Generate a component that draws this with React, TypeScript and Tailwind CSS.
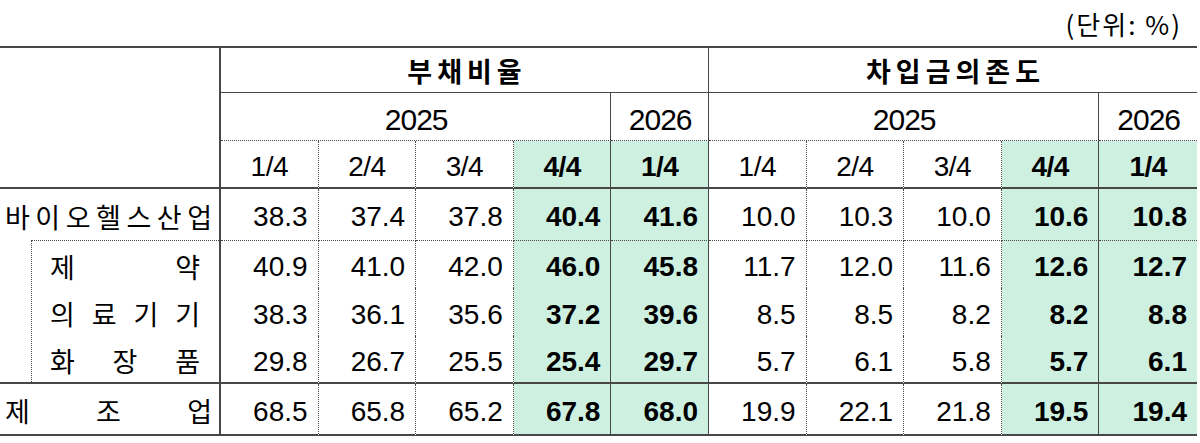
import React from "react";

type DataRow = { vals: string[] };

const rows: DataRow[] = [
  { vals: ["38.3", "37.4", "37.8", "40.4", "41.6", "10.0", "10.3", "10.0", "10.6", "10.8"] },
  { vals: ["40.9", "41.0", "42.0", "46.0", "45.8", "11.7", "12.0", "11.6", "12.6", "12.7"] },
  { vals: ["38.3", "36.1", "35.6", "37.2", "39.6", "8.5", "8.5", "8.2", "8.2", "8.8"] },
  { vals: ["29.8", "26.7", "25.5", "25.4", "29.7", "5.7", "6.1", "5.8", "5.7", "6.1"] },
  { vals: ["68.5", "65.8", "65.2", "67.8", "68.0", "19.9", "22.1", "21.8", "19.5", "19.4"] },
];

const quarters = ["1/4", "2/4", "3/4", "4/4", "1/4", "1/4", "2/4", "3/4", "4/4", "1/4"];

function rightCls(i: number): string {
  if (i === 9) return "";
  if (i === 3 || i === 4 || i === 8) return "border-r";
  return "border-r [border-right-style:dotted]";
}

function isHi(i: number): boolean {
  return i === 3 || i === 4 || i === 8 || i === 9;
}

function bottomCls(r: number): string {
  if (r === 0) return "border-b [border-bottom-style:dotted]";
  if (r === 1 || r === 2) return "";
  return "border-b-2";
}

function Spread({ chars, className }: { chars: string[]; className: string }) {
  return (
    <div className={"flex items-center justify-between " + className}>
      {chars.map((c, i) => (
        <span key={i}>{c}</span>
      ))}
    </div>
  );
}

export default function App() {
  const kr = "font-['Noto_Sans_CJK_KR',sans-serif]";
  const cells: React.ReactNode[] = [];

  // Header row 1
  cells.push(
    <div key="corner" className="row-span-3 border-r-2 border-b-2 border-[#474747]" />
  );
  cells.push(
    <div
      key="h-debt"
      className={"col-span-5 border-b border-r border-[#474747] flex items-center justify-center pl-[5px] text-[27px] font-bold tracking-[5px] leading-none " + kr}
    >
      부채비율
    </div>
  );
  cells.push(
    <div
      key="h-borrow"
      className={"col-span-5 border-b border-[#474747] flex items-center justify-center pl-[5px] text-[27px] font-bold tracking-[5px] leading-none " + kr}
    >
      차입금의존도
    </div>
  );

  // Header row 2
  const yearCls =
    "border-b [border-bottom-style:dotted] border-[#474747] flex items-center justify-center pt-[6px] pl-[1px] text-[30px] tracking-[-1px] leading-none";
  cells.push(<div key="y1" className={"col-span-4 border-r " + yearCls}>2025</div>);
  cells.push(<div key="y2" className={"border-r " + yearCls}>2026</div>);
  cells.push(<div key="y3" className={"col-span-4 border-r " + yearCls}>2025</div>);
  cells.push(<div key="y4" className={yearCls}>2026</div>);

  // Header row 3
  quarters.forEach((q, i) => {
    cells.push(
      <div
        key={"q" + i}
        className={
          "border-b-2 border-[#474747] flex items-center justify-center pt-[5px] text-[28px] tracking-[-0.5px] leading-none " +
          rightCls(i) +
          (isHi(i) ? " bg-[#cdf0e1] font-bold" : "")
        }
      >
        {q}
      </div>
    );
  });

  const dataCells = (r: number) =>
    rows[r].vals.map((v, i) => (
      <div
        key={"d" + r + "-" + i}
        className={
          "border-[#474747] flex items-center justify-end pr-[10px] pt-[5px] text-[28px] leading-none " +
          rightCls(i) +
          " " +
          bottomCls(r) +
          (isHi(i) ? " bg-[#cdf0e1] font-bold" : "")
        }
      >
        {v}
      </div>
    ));

  // Row: 바이오헬스산업
  cells.push(
    <div key="l0" className="border-r-2 border-[#474747] flex flex-col">
      <Spread
        chars={["바", "이", "오", "헬", "스", "산", "업"]}
        className={"flex-1 pl-[5px] pr-[7px] pt-[3px] text-[27px] leading-none " + kr}
      />
      <div className="ml-[31px] h-0 border-b border-[#474747] [border-bottom-style:dotted]" />
    </div>
  );
  cells.push(...dataCells(0));

  // Sub rows
  cells.push(
    <div key="lsub" className="row-span-3 border-r-2 border-b-2 border-[#474747] pl-[31px]">
      <div className="h-full border-l border-[#474747] [border-left-style:dotted] flex flex-col">
        <Spread chars={["제", "약"]} className={"h-[47px] pl-[18px] pr-[19px] pt-[3px] text-[27px] leading-none " + kr} />
        <Spread chars={["의", "료", "기", "기"]} className={"h-[48px] pl-[18px] pr-[19px] pt-[3px] text-[27px] leading-none " + kr} />
        <Spread chars={["화", "장", "품"]} className={"h-[46px] pl-[18px] pr-[19px] pt-[3px] text-[27px] leading-none " + kr} />
      </div>
    </div>
  );
  cells.push(...dataCells(1));
  cells.push(...dataCells(2));
  cells.push(...dataCells(3));

  // Row: 제조업
  cells.push(
    <Spread
      key="l4"
      chars={["제", "조", "업"]}
      className={"border-r-2 border-b-2 border-[#474747] pl-[5px] pr-[7px] pt-[3px] text-[27px] leading-none " + kr}
    />
  );
  cells.push(...dataCells(4));

  return (
    <div className="w-[1200px] h-[443px] bg-white text-black font-['Liberation_Sans',Arial,sans-serif] overflow-hidden">
      <div className={"h-[46px] flex items-center justify-end pr-[18px] pt-[2px] text-[26px] tracking-[2px] leading-none " + kr}>
        (단위:&nbsp;%)
      </div>
      <div className="grid w-[1197px] grid-cols-[221px_repeat(10,minmax(0,1fr))] grid-rows-[45px_48px_48px_52px_47px_48px_48px_52px] border-t-2 border-[#474747]">
        {cells}
      </div>
    </div>
  );
}
